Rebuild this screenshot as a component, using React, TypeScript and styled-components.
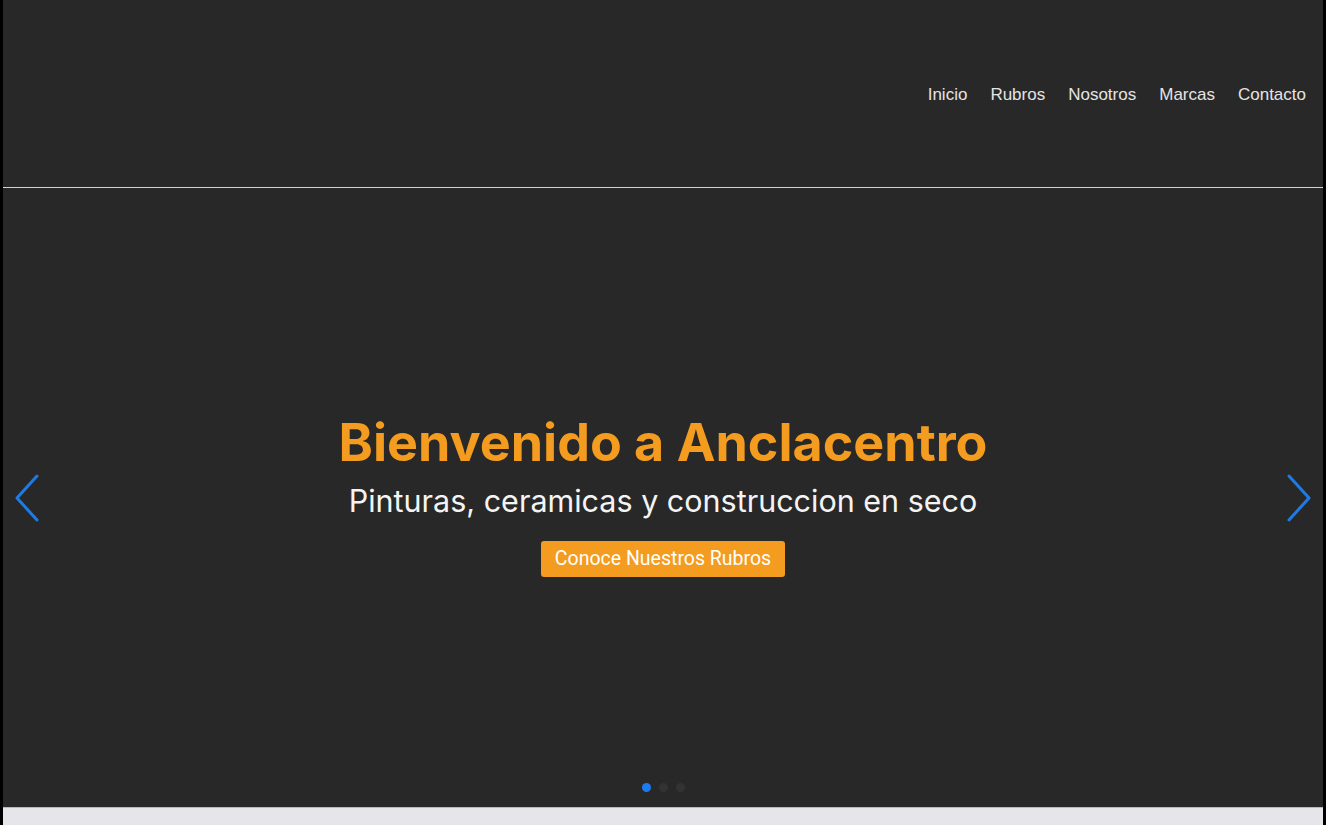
import React from "react";
import styled, { createGlobalStyle } from "styled-components";

const Global = createGlobalStyle`
  html, body { margin: 0; padding: 0; background: #000; }
  body { font-family: "Inter", "Liberation Sans", sans-serif; }
  * { box-sizing: border-box; }
`;

const Frame = styled.div`
  width: 1326px;
  height: 825px;
  display: flex;
  flex-direction: column;
  padding: 0 3px;
  background: #000;
  overflow: hidden;
`;

const Main = styled.div`
  display: flex;
  flex-direction: column;
  background: #282828;
  height: 807px;
`;

const Header = styled.header`
  height: 188px;
  border-bottom: 1px solid #d2d2d2;
  display: flex;
  align-items: center;
  justify-content: flex-end;
  padding: 0 17px 0 0;
`;

const Nav = styled.nav`
  display: flex;
  gap: 23px;
  margin-top: 2px;
`;

const NavLink = styled.a`
  font-family: "Liberation Sans", Arial, sans-serif;
  font-size: 17px;
  color: #e4e4e4;
  text-decoration: none;
`;

const Hero = styled.section`
  position: relative;
  flex: 1;
  display: flex;
  flex-direction: column;
  align-items: center;
  justify-content: center;
  padding-bottom: 6px;
`;

const Title = styled.h1`
  margin: 0;
  font-family: "Inter", sans-serif;
  font-weight: 700;
  font-size: 52px;
  color: #f39c1f;
  line-height: 1.2;
`;

const Subtitle = styled.p`
  margin: 9px 0 0;
  font-family: "Inter", sans-serif;
  font-size: 30.5px;
  color: #f4f4f4;
  line-height: 1.2;
`;

const Cta = styled.button`
  margin-top: 21px;
  height: 36px;
  width: 244px;
  border: none;
  border-radius: 3px;
  background: #f39c1f;
  color: #fff;
  font-family: "Roboto", sans-serif;
  font-size: 19.5px;
  cursor: pointer;
`;

const Arrow = styled.button<{ $side: "left" | "right" }>`
  position: absolute;
  top: 50%;
  ${(p) => (p.$side === "left" ? "left: 6px;" : "right: 6px;")}
  transform: translateY(-50%);
  background: none;
  border: none;
  padding: 0;
  width: 36px;
  height: 56px;
  display: flex;
  align-items: center;
  justify-content: center;
`;

const Dots = styled.div`
  position: absolute;
  bottom: 15px;
  left: 0;
  right: 0;
  display: flex;
  justify-content: center;
  gap: 8px;
`;

const Dot = styled.span<{ $active?: boolean }>`
  width: 9px;
  height: 9px;
  border-radius: 50%;
  background: ${(p) => (p.$active ? "#1d7bf0" : "#333")};
`;

const Footer = styled.div`
  flex: 1;
  background: #e6e6ea;
  border-top: 1px solid #b8b8bc;
`;

const Chevron = ({ dir }: { dir: "left" | "right" }) => (
  <svg width="28" height="48" viewBox="0 0 28 48" fill="none">
    <path
      d={dir === "left" ? "M24 2 L4 24 L24 46" : "M4 2 L24 24 L4 46"}
      stroke="#1e7be6"
      strokeWidth="3"
      strokeLinecap="round"
      strokeLinejoin="round"
    />
  </svg>
);

export default function App() {
  return (
    <>
      <Global />
      <Frame>
        <Main>
          <Header>
            <Nav>
              <NavLink href="#">Inicio</NavLink>
              <NavLink href="#">Rubros</NavLink>
              <NavLink href="#">Nosotros</NavLink>
              <NavLink href="#">Marcas</NavLink>
              <NavLink href="#">Contacto</NavLink>
            </Nav>
          </Header>
          <Hero>
            <Arrow $side="left" aria-label="Anterior">
              <Chevron dir="left" />
            </Arrow>
            <Title>Bienvenido a Anclacentro</Title>
            <Subtitle>Pinturas, ceramicas y construccion en seco</Subtitle>
            <Cta>Conoce Nuestros Rubros</Cta>
            <Arrow $side="right" aria-label="Siguiente">
              <Chevron dir="right" />
            </Arrow>
            <Dots>
              <Dot $active />
              <Dot />
              <Dot />
            </Dots>
          </Hero>
        </Main>
        <Footer />
      </Frame>
    </>
  );
}
